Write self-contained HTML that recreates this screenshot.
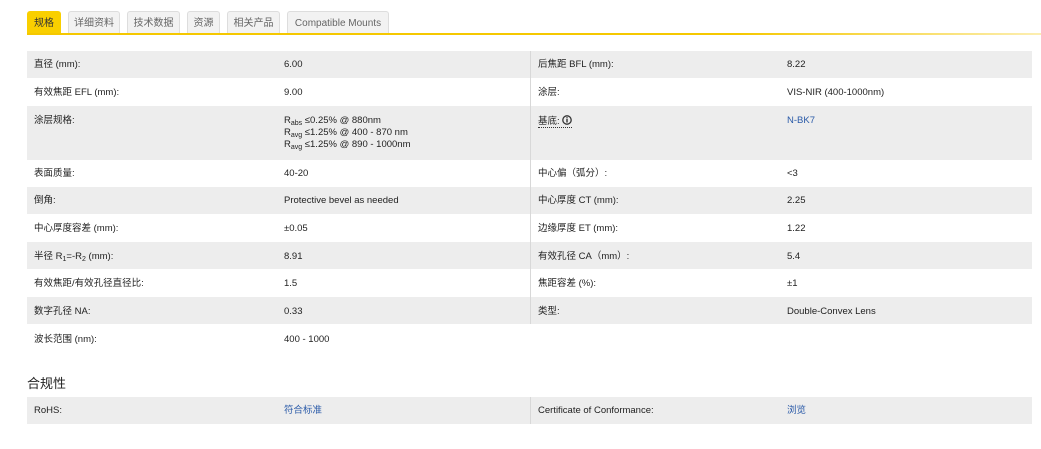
<!DOCTYPE html>
<html><head><meta charset="utf-8"><style>
*{margin:0;padding:0;box-sizing:border-box}
body{width:1041px;height:449px;background:#fff;position:relative;overflow:hidden;font-family:"Liberation Sans","Noto Sans CJK SC",sans-serif;font-size:9.5px;color:#222}
.tab{position:absolute;top:11px;height:23px;border:1px solid #ddd;border-bottom:none;background:#f2f2f2;border-radius:3px 3px 0 0;color:#666;font-size:10px;line-height:23px;text-align:center}
.tab.a{background:#f9cf00;border-color:#f9cf00;color:#333}
.line{position:absolute;top:33px;left:27px;width:1014px;height:2px;background:linear-gradient(to right,#f5c800 0,#f5c800 70%,rgba(245,200,0,0.3) 100%)}
.row{position:absolute;left:27px;width:1005px}
.g{background:#ededed}
.t{position:absolute;white-space:nowrap;line-height:12px;height:12px;margin-top:1px}
.div{position:absolute;left:530px;width:1px;background:#d8d8d8}
.l{color:#2a5aa8}
sub{font-size:7px;vertical-align:-2px;line-height:0}
h3{position:absolute;left:27px;top:375px;font-size:13px;line-height:18px;font-weight:normal;color:#222}
</style></head><body>
<div class="tab a" style="left:27px;width:34px">规格</div>
<div class="tab" style="left:68px;width:52px">详细资料</div>
<div class="tab" style="left:127px;width:53px">技术数据</div>
<div class="tab" style="left:187px;width:33px">资源</div>
<div class="tab" style="left:227px;width:53px">相关产品</div>
<div class="tab" style="left:287px;width:102px">Compatible Mounts</div>
<div class="line"></div>

<div class="row g" style="top:51px;height:27px"></div>
<div class="row g" style="top:106px;height:54px"></div>
<div class="row g" style="top:187px;height:27px"></div>
<div class="row g" style="top:242px;height:27px"></div>
<div class="row g" style="top:297px;height:27px"></div>
<div class="div" style="top:51px;height:273px"></div>

<div class="t" style="left:34px;top:58px">直径 (mm):</div><div class="t" style="left:284px;top:58px">6.00</div>
<div class="t" style="left:538px;top:58px">后焦距 BFL (mm):</div><div class="t" style="left:787px;top:58px">8.22</div>
<div class="t" style="left:34px;top:86px">有效焦距 EFL (mm):</div><div class="t" style="left:284px;top:86px">9.00</div>
<div class="t" style="left:538px;top:86px">涂层:</div><div class="t" style="left:787px;top:86px">VIS-NIR (400-1000nm)</div>
<div class="t" style="left:34px;top:114px">涂层规格:</div>
<div class="t" style="left:284px;top:114px;height:auto">R<sub>abs</sub> ≤0.25% @ 880nm<br>R<sub>avg</sub> ≤1.25% @ 400 - 870 nm<br>R<sub>avg</sub> ≤1.25% @ 890 - 1000nm</div>
<div class="t" style="left:538px;top:114px"><span style="border-bottom:1px dotted #333">基底: <svg width="10" height="10" viewBox="0 0 10 10" style="vertical-align:-1px"><circle cx="5" cy="5" r="4.2" fill="none" stroke="#333" stroke-width="1.3"/><rect x="4.3" y="4" width="1.4" height="3.5" fill="#333"/><rect x="4.3" y="2.2" width="1.4" height="1.2" fill="#333"/></svg></span></div>
<div class="t l" style="left:787px;top:114px">N-BK7</div>
<div class="t" style="left:34px;top:167px">表面质量:</div><div class="t" style="left:284px;top:167px">40-20</div>
<div class="t" style="left:538px;top:167px">中心偏（弧分）:</div><div class="t" style="left:787px;top:167px">&lt;3</div>
<div class="t" style="left:34px;top:194px">倒角:</div><div class="t" style="left:284px;top:194px">Protective bevel as needed</div>
<div class="t" style="left:538px;top:194px">中心厚度 CT (mm):</div><div class="t" style="left:787px;top:194px">2.25</div>
<div class="t" style="left:34px;top:222px">中心厚度容差 (mm):</div><div class="t" style="left:284px;top:222px">±0.05</div>
<div class="t" style="left:538px;top:222px">边缘厚度 ET (mm):</div><div class="t" style="left:787px;top:222px">1.22</div>
<div class="t" style="left:34px;top:250px">半径 R<sub>1</sub>=-R<sub>2</sub> (mm):</div><div class="t" style="left:284px;top:250px">8.91</div>
<div class="t" style="left:538px;top:250px">有效孔径 CA（mm）:</div><div class="t" style="left:787px;top:250px">5.4</div>
<div class="t" style="left:34px;top:277px">有效焦距/有效孔径直径比:</div><div class="t" style="left:284px;top:277px">1.5</div>
<div class="t" style="left:538px;top:277px">焦距容差 (%):</div><div class="t" style="left:787px;top:277px">±1</div>
<div class="t" style="left:34px;top:305px">数字孔径 NA:</div><div class="t" style="left:284px;top:305px">0.33</div>
<div class="t" style="left:538px;top:305px">类型:</div><div class="t" style="left:787px;top:305px">Double-Convex Lens</div>
<div class="t" style="left:34px;top:333px">波长范围 (nm):</div><div class="t" style="left:284px;top:333px">400 - 1000</div>

<h3>合规性</h3>
<div class="row g" style="top:397px;height:27px"></div>
<div class="div" style="top:397px;height:27px"></div>
<div class="t" style="left:34px;top:404px">RoHS:</div><div class="t l" style="left:284px;top:404px">符合标准</div>
<div class="t" style="left:538px;top:404px">Certificate of Conformance:</div><div class="t l" style="left:787px;top:404px">浏览</div>
</body></html>
